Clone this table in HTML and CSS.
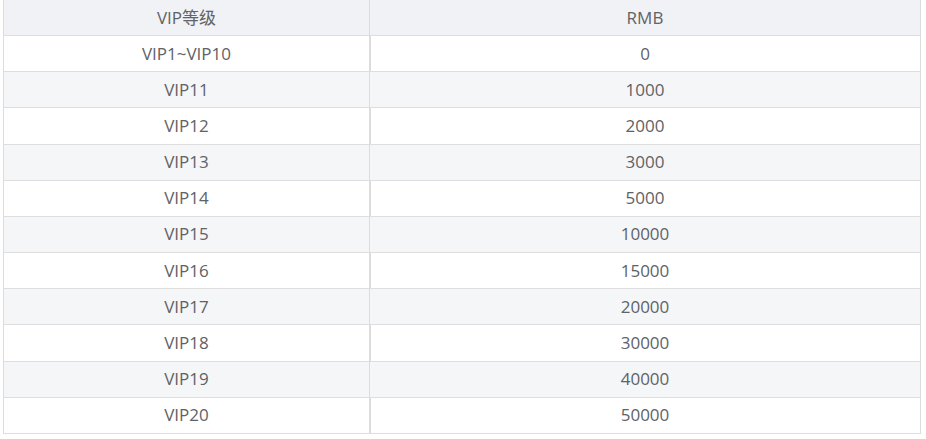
FILE: index.html
```html
<!DOCTYPE html>
<html lang="zh">
<head>
<meta charset="utf-8">
<title>VIP</title>
<link rel="stylesheet" href="styles.css">
</head>
<body>
<table class="vip-table">
  <thead>
    <tr><th>VIP等级</th><th>RMB</th></tr>
  </thead>
  <tbody>
    <tr><td>VIP1~VIP10</td><td>0</td></tr>
    <tr><td>VIP11</td><td>1000</td></tr>
    <tr><td>VIP12</td><td>2000</td></tr>
    <tr><td>VIP13</td><td>3000</td></tr>
    <tr><td>VIP14</td><td>5000</td></tr>
    <tr><td>VIP15</td><td>10000</td></tr>
    <tr><td>VIP16</td><td>15000</td></tr>
    <tr><td>VIP17</td><td>20000</td></tr>
    <tr><td>VIP18</td><td>30000</td></tr>
    <tr><td>VIP19</td><td>40000</td></tr>
    <tr><td>VIP20</td><td>50000</td></tr>
  </tbody>
</table>
</body>
</html>
```
FILE: styles.css
```css
html, body {
  margin: 0;
  padding: 0;
  background: #ffffff;
}
body {
  padding: 0 5px 0 3px;
  font-family: "Open Sans", "Noto Sans CJK SC", sans-serif;
}
.vip-table {
  width: 918px;
  border-collapse: separate;
  border-spacing: 0;
  border-left: 1px solid #dcdcdc;
  border-right: 1px solid #dcdcdc;
  table-layout: fixed;
  color: #606266;
  font-size: 17px;
  line-height: 20px;
}
.vip-table th,
.vip-table td {
  text-align: center;
  font-weight: normal;
  padding: 1px 0 1px;
  border-bottom: 1px solid #dedede;
}
.vip-table th:first-child,
.vip-table td:first-child {
  width: 365px;
  border-right: 1px solid #dcdcdc;
}
.vip-table th {
  height: 33px;
  background: #f1f2f6;
}
.vip-table td {
  height: 33.18px;
}
.vip-table tbody tr:nth-child(even) td {
  background: #f5f6f8;
}
.vip-table tbody tr:nth-child(odd) td:last-child {
  box-shadow: inset 1px 0 0 #dcdcdc;
}
```
